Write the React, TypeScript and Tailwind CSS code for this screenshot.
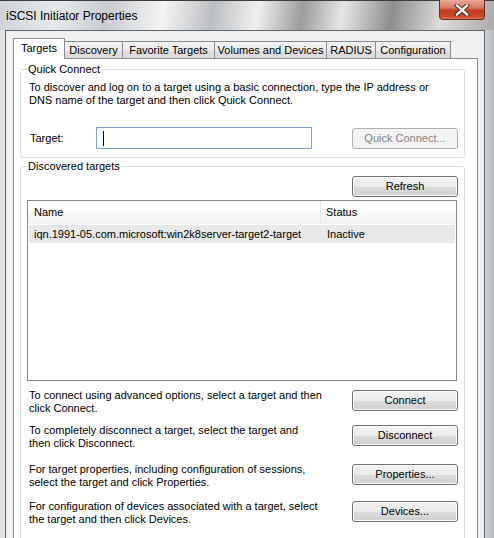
import React from "react";

// tab strip of the property sheet
const tabs = [
  { label: "Targets", w: "w-[52px]", active: true },
  { label: "Discovery", w: "w-[58px]" },
  { label: "Favorite Targets", w: "w-[92px]" },
  { label: "Volumes and Devices", w: "w-[112px]" },
  { label: "RADIUS", w: "w-[49px]" },
  { label: "Configuration", w: "w-[75px]" },
];

const actions = [
  { lines: ["To connect using advanced options, select a target and then", "click Connect."], button: "Connect", mt: "mt-[9px]" },
  { lines: ["To completely disconnect a target, select the target and", "then click Disconnect."], button: "Disconnect", mt: "mt-[10px]" },
  { lines: ["For target properties, including configuration of sessions,", "select the target and click Properties."], button: "Properties...", mt: "mt-[14px]" },
  { lines: ["For configuration of devices associated with a target, select", "the target and then click Devices."], button: "Devices...", mt: "mt-[12px]" },
];

function WinButton({ children, disabled = false }: { children: React.ReactNode; disabled?: boolean }) {
  if (disabled) {
    return (
      <div className="w-[106px] h-[21px] shrink-0 rounded-[3px] border border-[#adb2b5] bg-[#f4f4f4] flex items-center justify-center text-[#838383]">
        {children}
      </div>
    );
  }
  return (
    <div className="w-[106px] h-[21px] shrink-0 rounded-[3px] border border-[#707070] bg-[linear-gradient(#f2f2f2_0%,#ebebeb_50%,#dddddd_51%,#cfcfcf_100%)] shadow-[inset_0_0_0_1px_#fcfcfc] flex items-center justify-center text-black">
      {children}
    </div>
  );
}

export default function App() {
  return (
    <div className="w-[494px] h-[538px] overflow-hidden flex flex-col font-['Liberation_Sans',Arial,sans-serif] text-[11px] leading-[13px] text-black bg-[linear-gradient(90deg,#dfe3e7_0%,#e6e9ec_2%,#eef0f2_50%,#d2d5d8_98%,#b9bcbf_100%)]">
      {/* Title bar */}
      <div className="h-[30px] shrink-0 flex items-start justify-between border-t border-[#3c3c3c] bg-[linear-gradient(100deg,#cfd4d9_0%,#e6e9ec_12%,#c9ccd0_22%,#f4f4f4_33%,#bcbfc2_43%,#f0f0f0_52%,#9c9c9c_61%,#e6e6e6_69%,#8e8e8e_79%,#dcdcdc_89%,#aaaaaa_100%)]">
        <div className="pl-[6px] pt-[8px] text-[12px] leading-[14px] text-black">iSCSI Initiator Properties</div>
        <div className="mr-[9px] -mt-[1px] w-[46px] h-[20px] rounded-b-[4px] border border-t-0 border-[#6b2b20] bg-[linear-gradient(#eaa899_0%,#d87a63_40%,#c43b1f_55%,#c9452a_85%,#e0745a_100%)] flex items-center justify-center">
          <svg width="16" height="12" viewBox="0 0 16 12">
            <path d="M3 1.5 L13 10.5 M13 1.5 L3 10.5" stroke="#4a1c14" strokeWidth="4.2" strokeLinecap="square" />
            <path d="M3 1.5 L13 10.5 M13 1.5 L3 10.5" stroke="#ffffff" strokeWidth="2.4" strokeLinecap="square" />
          </svg>
        </div>
      </div>

      {/* Window body */}
      <div className="flex flex-1">
        <div className="w-[5px] shrink-0" />
        <div className="w-[480px] shrink-0 border border-b-0 border-[#5b646c] bg-[#f0f0f0] pl-[7px] pt-[7px] flex flex-col">
          {/* Tabs */}
          <div className="h-[21px] flex items-end">
            {tabs.map((t) =>
              t.active ? (
                <div key={t.label} className={`${t.w} h-[21px] relative z-10 bg-white border border-b-0 border-[#898c95] flex items-center justify-center pb-[1px]`}>
                  {t.label}
                </div>
              ) : (
                <div key={t.label} className={`${t.w} h-[18px] border-t border-r border-[#898c95] bg-[linear-gradient(#f3f3f3_0%,#ebebeb_50%,#e0e0e0_51%,#d7d7d7_100%)] flex items-center justify-center`}>
                  {t.label}
                </div>
              )
            )}
          </div>

          {/* Tab page */}
          <div className="-mt-[1px] w-[465px] flex-1 border border-b-0 border-[#898c95] bg-white pl-[6px] pr-[12px] pt-[3px]">
            {/* Quick Connect */}
            <fieldset className="border border-[#d5dfe5] rounded-[3px] pl-[8px] pr-[6px] pb-[8px]">
              <legend className="-ml-[2px] px-[1px] leading-[14px]">Quick Connect</legend>
              <div className="pt-[5px] whitespace-nowrap">
                To discover and log on to a target using a basic connection, type the IP address or
                <br />
                DNS name of the target and then click Quick Connect.
              </div>
              <div className="mt-[20px] flex items-start">
                <div className="ml-[1px] w-[66px] pt-[5px]">Target:</div>
                <div className="w-[216px] h-[22px] border border-[#7da2ce] bg-white flex items-center pl-[6px]">
                  <div className="w-px h-[15px] bg-black" />
                </div>
                <div className="ml-auto mt-[1px]">
                  <WinButton disabled>Quick Connect...</WinButton>
                </div>
              </div>
            </fieldset>

            {/* Discovered targets */}
            <fieldset className="mt-[1px] border border-b-0 border-[#d5dfe5] rounded-t-[3px] pl-[6px] pr-[6px] pb-[20px]">
              <legend className="ml-0 px-[1px] leading-[14px]">Discovered targets</legend>
              <div className="mt-[3px] flex justify-end">
                <WinButton>Refresh</WinButton>
              </div>

              {/* Target list */}
              <div className="mt-[3px] mr-[1px] h-[181px] border border-[#828790] bg-white">
                <div className="h-[23px] flex bg-[linear-gradient(#ffffff_0%,#ffffff_50%,#f7f8f9_51%,#f1f2f4_100%)] border-b border-[#eeeeee]">
                  <div className="w-[293px] pl-[6px] flex items-center border-r border-[#e3e5e8]">Name</div>
                  <div className="flex-1 pl-[5px] flex items-center">Status</div>
                </div>
                <div className="mt-[1px] mx-[1px] h-[18px] flex items-center bg-[#e9e9e9]">
                  <div className="w-[292px] pl-[5px] whitespace-nowrap">iqn.1991-05.com.microsoft:win2k8server-target2-target</div>
                  <div className="pl-[6px]">Inactive</div>
                </div>
              </div>

              {actions.map((a) => (
                <div key={a.button} className={`${a.mt} flex items-start justify-between`}>
                  <div className="ml-[2px] whitespace-nowrap -mt-[1px]">
                    {a.lines[0]}
                    <br />
                    {a.lines[1]}
                  </div>
                  <WinButton>{a.button}</WinButton>
                </div>
              ))}
            </fieldset>
          </div>
        </div>
        <div className="flex-1" />
      </div>
    </div>
  );
}
